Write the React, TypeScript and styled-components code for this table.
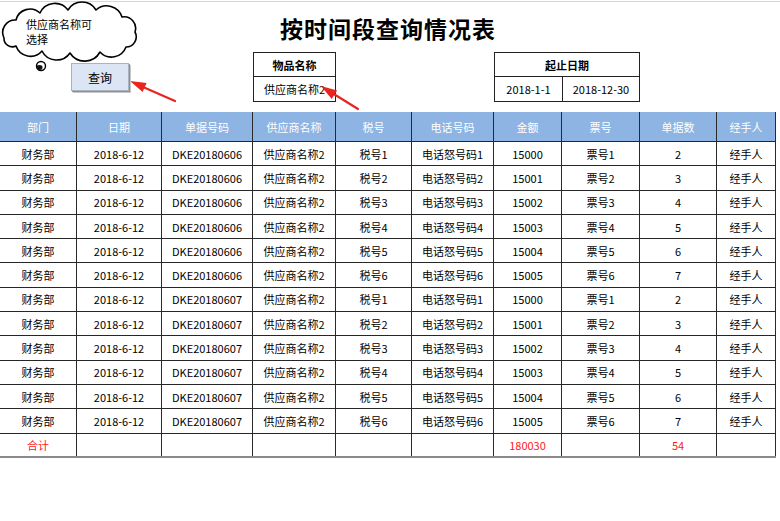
import React from "react";
import styled, { createGlobalStyle } from "styled-components";

const GlobalStyle = createGlobalStyle`
  html, body { margin: 0; padding: 0; background: #ffffff; }
  body { font-family: "Noto Sans CJK SC", "Liberation Sans", sans-serif; color: #000; }
  * { box-sizing: border-box; }
`;

const COLS = "77px 85px 91px 83px 76px 82px 68px 78px 77px 59px";

const Page = styled.div`
  position: relative;
  width: 780px;
  height: 521px;
  overflow: hidden;
`;

const TopRule = styled.div`
  margin-top: 1px;
  height: 1px;
  background: #d6d6d6;
`;

const Header = styled.div`
  display: grid;
  grid-template-columns: ${COLS};
  grid-template-rows: 50px 25px 25px;
  margin-bottom: 10px;
`;

const Title = styled.h1`
  grid-column: 1 / -1;
  grid-row: 1;
  margin: 0;
  align-self: center;
  text-align: center;
  font-size: 23px;
  font-weight: 700;
  letter-spacing: 1px;
  line-height: 28px;
  padding-top: 2px;
`;

const InfoBox = styled.div<{ $col: string }>`
  grid-column: ${(p) => p.$col};
  grid-row: 2 / 4;
  display: grid;
  grid-template-rows: 1fr 1fr;
  border: 1px solid #222;
`;

const InfoHead = styled.div`
  display: flex;
  align-items: center;
  justify-content: center;
  font-size: 11px;
  font-weight: 700;
  border-bottom: 1px solid #222;
`;

const InfoValues = styled.div<{ $split?: boolean }>`
  display: grid;
  grid-template-columns: ${(p) => (p.$split ? "68px 1fr" : "1fr")};
`;

const InfoValue = styled.div<{ $divider?: boolean }>`
  display: flex;
  align-items: center;
  justify-content: center;
  font-size: 11px;
  white-space: nowrap;
  overflow: hidden;
  border-right: ${(p) => (p.$divider ? "1px solid #222" : "none")};
`;

const Table = styled.div`
  width: 776px;
`;

const Row = styled.div<{ $head?: boolean; $total?: boolean }>`
  display: grid;
  grid-template-columns: ${COLS};
  height: ${(p) => (p.$head ? "30px" : "24.3px")};
  background: ${(p) => (p.$head ? "#8db4e2" : "#ffffff")};
  color: ${(p) => (p.$head ? "#ffffff" : p.$total ? "#ff1a1a" : "#000000")};
  border-bottom: ${(p) => (p.$total ? "2px solid #8a8a8a" : "1px solid #262626")};
`;

const Cell = styled.div`
  display: flex;
  align-items: center;
  justify-content: center;
  font-size: 11px;
  white-space: nowrap;
  border-right: 1px solid #2a2a2a;
`;

const Overlay = styled.div`
  position: absolute;
  inset: 0;
  pointer-events: none;
`;

const Drawing = styled.svg`
  position: absolute;
  left: 0;
  top: 0;
`;

const CloudText = styled.div`
  position: absolute;
  left: 26px;
  top: 17px;
  font-size: 11px;
  line-height: 15px;
  width: 72px;
`;

const QueryButton = styled.button`
  position: absolute;
  left: 71px;
  top: 63px;
  width: 58px;
  height: 28px;
  padding: 0;
  font-family: "Noto Sans CJK SC", sans-serif;
  font-size: 12px;
  color: #000;
  background: #dbe5f3;
  border: 1px solid #a9b3c0;
  box-shadow: 1px 1px 0 #8f8f8f, 2px 2px 0 #c8c8c8;
  pointer-events: auto;
`;

const headers = ["部门", "日期", "单据号码", "供应商名称", "税号", "电话号码", "金额", "票号", "单据数", "经手人"];

const rows = Array.from({ length: 12 }, (_, i) => {
  const k = i % 6;
  return [
    "财务部",
    "2018-6-12",
    i < 6 ? "DKE20180606" : "DKE20180607",
    "供应商名称2",
    `税号${k + 1}`,
    `电话怒号码${k + 1}`,
    `${15000 + k}`,
    `票号${k + 1}`,
    `${k + 2}`,
    "经手人",
  ];
});

const totals = ["合计", "", "", "", "", "", "180030", "", "54", ""];

const cloudPath =
  "M 4 38 A 12.5 12.5 0 0 1 16 20 A 14.5 14.5 0 0 1 40 13 A 16.3 16.3 0 0 1 68 10 " +
  "A 16.2 16.2 0 0 1 96 10 A 16 16 0 0 1 122 17 A 11.5 11.5 0 0 1 135 32 " +
  "A 10.2 10.2 0 0 1 126 47 A 15.5 15.5 0 0 1 100 52 A 17.4 17.4 0 0 1 70 53 " +
  "A 16.3 16.3 0 0 1 42 51 A 15.3 15.3 0 0 1 16 46 A 8.4 8.4 0 0 1 4 38 Z";

export default function App() {
  return (
    <Page>
      <GlobalStyle />
      <TopRule />
      <Header>
        <Title>按时间段查询情况表</Title>
        <InfoBox $col="4 / 5">
          <InfoHead>物品名称</InfoHead>
          <InfoValues>
            <InfoValue>供应商名称2</InfoValue>
          </InfoValues>
        </InfoBox>
        <InfoBox $col="7 / 9">
          <InfoHead>起止日期</InfoHead>
          <InfoValues $split>
            <InfoValue $divider>2018-1-1</InfoValue>
            <InfoValue>2018-12-30</InfoValue>
          </InfoValues>
        </InfoBox>
      </Header>
      <Table>
        <Row $head>
          {headers.map((h) => (
            <Cell key={h}>{h}</Cell>
          ))}
        </Row>
        {rows.map((r, i) => (
          <Row key={i}>
            {r.map((c, j) => (
              <Cell key={j}>{c}</Cell>
            ))}
          </Row>
        ))}
        <Row $total>
          {totals.map((c, j) => (
            <Cell key={j}>{c}</Cell>
          ))}
        </Row>
      </Table>
      <Overlay>
        <Drawing width="780" height="521" viewBox="0 0 780 521">
          <path d={cloudPath} fill="#ffffff" stroke="#000" strokeWidth="1.6" strokeLinejoin="round" />
          <circle cx="41" cy="66" r="4.5" fill="#ffffff" stroke="#000" strokeWidth="1.4" />
          <ellipse cx="39.5" cy="67.5" rx="3" ry="2.4" fill="#111" />
          <line x1="175" y1="101" x2="143" y2="87" stroke="#e8251f" strokeWidth="2.2" strokeLinecap="round" />
          <polygon points="130,81 146.6,82.9 142.6,92.1" fill="#e8251f" />
          <line x1="358" y1="109" x2="333" y2="93.5" stroke="#e8251f" strokeWidth="2.2" strokeLinecap="round" />
          <polygon points="321,86 337.1,90.5 331.7,98.9" fill="#e8251f" />
        </Drawing>
        <CloudText>
          供应商名称可
          <br />
          选择
        </CloudText>
        <QueryButton>查询</QueryButton>
      </Overlay>
    </Page>
  );
}
